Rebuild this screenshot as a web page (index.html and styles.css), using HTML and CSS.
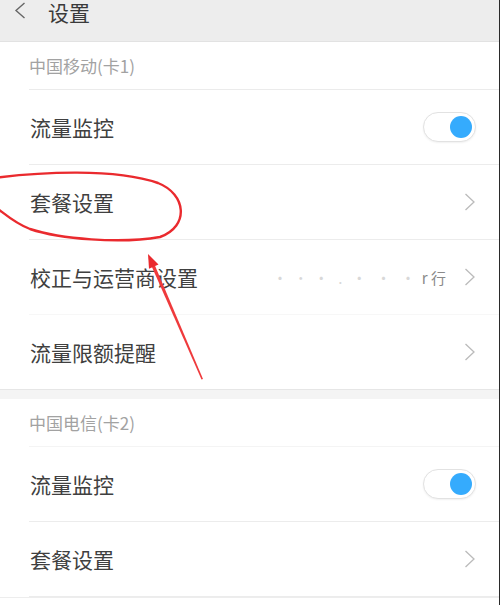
FILE: index.html
```html
<!DOCTYPE html>
<html lang="zh-CN">
<head>
    <meta charset="UTF-8">
    <meta name="viewport" content="width=device-width, initial-scale=1.0">
    <title>设置</title>
    <link rel="stylesheet" href="styles.css">
</head>
<body>
    <div class="page">
        <div class="top-bar">
            <svg class="back" width="12" height="17" viewBox="0 0 12 17">
                <path d="M10.5 1 L2 8.5 L10.5 16" fill="none" stroke="#666" stroke-width="1.4"/>
            </svg>
            <span class="title">设置</span>
        </div>

        <div class="section">
            <div class="section-title">中国移动(卡1)</div>
            <div class="row">
                <span class="label">流量监控</span>
                <span class="switch on"><span class="knob"></span></span>
            </div>
            <div class="row">
                <span class="label">套餐设置</span>
                <svg class="arrow" width="12" height="18" viewBox="0 0 12 18">
                    <path d="M1.5 1 L10 9 L1.5 17" fill="none" stroke="#bbb" stroke-width="1.3"/>
                </svg>
            </div>
            <div class="row faint-line">
                <span class="label">校正与运营商设置</span>
                <span class="value"><span class="blur">· ˙ · . · · ·</span> r 行</span>
                <svg class="arrow" width="12" height="18" viewBox="0 0 12 18">
                    <path d="M1.5 1 L10 9 L1.5 17" fill="none" stroke="#bbb" stroke-width="1.3"/>
                </svg>
            </div>
            <div class="row last">
                <span class="label">流量限额提醒</span>
                <svg class="arrow" width="12" height="18" viewBox="0 0 12 18">
                    <path d="M1.5 1 L10 9 L1.5 17" fill="none" stroke="#bbb" stroke-width="1.3"/>
                </svg>
            </div>
        </div>

        <div class="gap"></div>

        <div class="section second">
            <div class="section-title">中国电信(卡2)</div>
            <div class="row">
                <span class="label">流量监控</span>
                <span class="switch on"><span class="knob"></span></span>
            </div>
            <div class="row">
                <span class="label">套餐设置</span>
                <svg class="arrow" width="12" height="18" viewBox="0 0 12 18">
                    <path d="M1.5 1 L10 9 L1.5 17" fill="none" stroke="#bbb" stroke-width="1.3"/>
                </svg>
            </div>
        </div>

        <!-- red hand-drawn marks on top of the screenshot -->
        <svg class="marks" width="500" height="605" viewBox="0 0 500 605">
            <path d="M-6 178 C 40 172, 115 168, 158 183 C 186 194, 190 226, 160 237 C 120 244, 60 239, 30 229 C 14 223, 4 213, -6 206"
                  fill="none" stroke="#ea2a2e" stroke-width="2.4" stroke-linecap="round"/>
            <polygon points="203,379 201.5,379.5 151.5,266 154.5,264.5" fill="#ef3a3c"/>
            <polygon points="148,254 158.5,264.5 149,268.8" fill="#ea2a2e"/>
        </svg>
    </div>
</body>
</html>
```

FILE: styles.css
```css
body {
    margin: 0;
    background-color: #fff;
    font-family: "Noto Sans CJK SC", "Noto Sans", sans-serif;
}

.page {
    position: relative;
    width: 499px;
    height: 605px;
    overflow: hidden;
    border-right: 1px solid #2a2a2a;
    background-color: #fff;
}

.top-bar {
    display: flex;
    align-items: flex-start;
    height: 41px;
    background-color: #ededed;
    border-bottom: 1px solid #e2e2e2;
}

.back {
    margin: 2px 0 0 14px;
}

.title {
    margin: 1px 0 0 22px;
    font-size: 21px;
    line-height: 22px;
    color: #3a3a3a;
}

.section {
    background-color: #fff;
    border-bottom: 1px solid #e6e6e6;
}

.section.second {
    border-bottom-color: #ededed;
}

.gap {
    height: 9px;
    background-color: #f4f4f4;
}

.section-title {
    height: 47px;
    margin-left: 29px;
    display: flex;
    align-items: center;
    font-size: 17px;
    color: #a2a2a2;
    border-bottom: 1px solid #ebebeb;
}

.second .section-title {
    border-bottom-color: #f4f4f4;
}

.row {
    display: flex;
    align-items: center;
    height: 74px;
    margin-left: 29px;
    padding-right: 23px;
    border-bottom: 1px solid #ececec;
}

.row.faint-line {
    border-bottom-color: #f7f7f7;
}

.row.last {
    border-bottom: none;
}

.label {
    flex: 1;
    padding-left: 1px;
    font-size: 21px;
    color: #404040;
}

.value {
    margin-right: 18px;
    font-size: 15px;
    color: #8a8a8a;
}

.value .blur {
    color: #d8d8d8;
    letter-spacing: 3px;
}

.arrow {
    display: block;
}

.switch {
    position: relative;
    box-sizing: border-box;
    width: 53px;
    height: 30px;
    border: 1px solid #e2e2e2;
    border-radius: 15px;
    background-color: #fff;
    box-shadow: 0 1px 2px rgba(0, 0, 0, 0.06);
}

.knob {
    position: absolute;
    top: 3px;
    right: 3px;
    width: 22px;
    height: 22px;
    border-radius: 50%;
    background-color: #35abfd;
}

.marks {
    position: absolute;
    top: 0;
    left: 0;
    pointer-events: none;
}
```
